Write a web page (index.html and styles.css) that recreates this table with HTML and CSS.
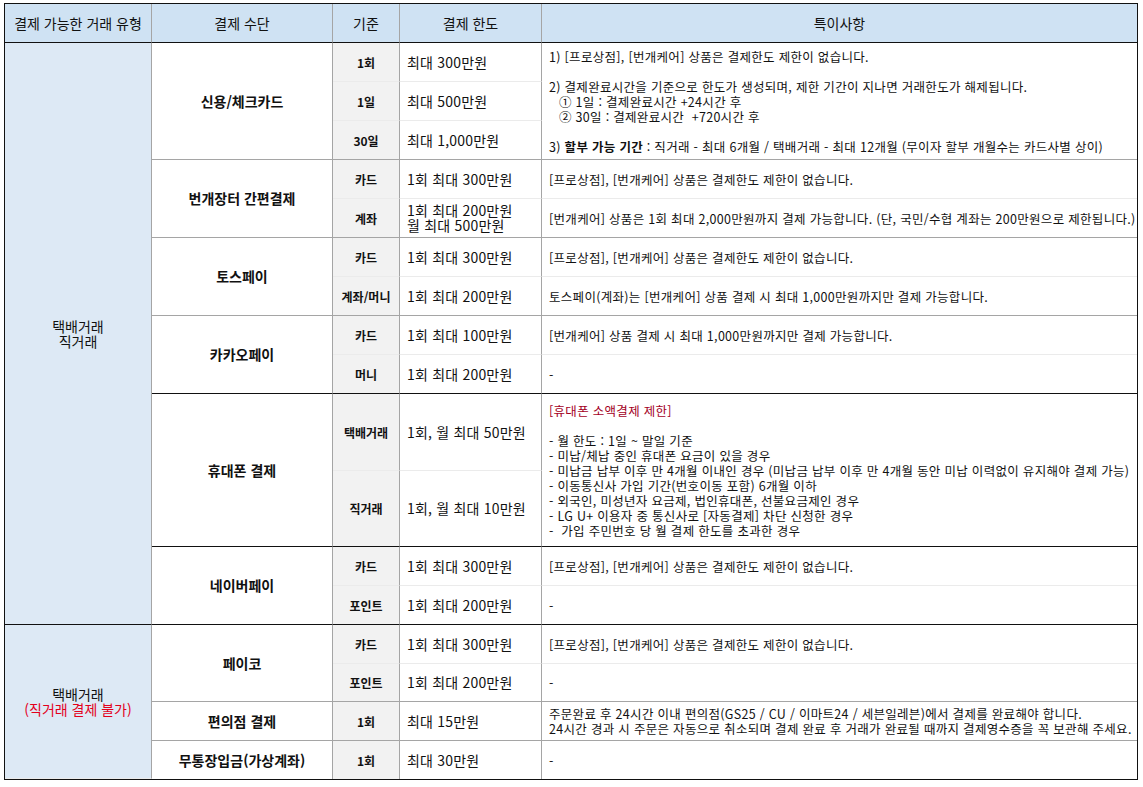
FILE: index.html
```html
<!DOCTYPE html>
<html lang="ko">
<head>
<meta charset="utf-8">
<title>결제 한도 안내</title>
<link rel="stylesheet" href="styles.css">
</head>
<body>
<table class="pay">
  <colgroup>
    <col class="c-type">
    <col class="c-method">
    <col class="c-basis">
    <col class="c-limit">
    <col class="c-note">
  </colgroup>
  <thead>
    <tr class="head">
      <th>결제 가능한 거래 유형</th>
      <th>결제 수단</th>
      <th>기준</th>
      <th>결제 한도</th>
      <th class="last">특이사항</th>
    </tr>
  </thead>
  <tbody>
    <!-- 신용/체크카드 -->
    <tr class="r">
      <td class="type dark" rowspan="13">택배거래<br>직거래</td>
      <td class="method gray" rowspan="3">신용/체크카드</td>
      <td class="basis">1회</td>
      <td class="limit">최대 300만원</td>
      <td class="note gray" rowspan="3">1) [프로상점], [번개케어] 상품은 결제한도 제한이 없습니다.<br><br>2) 결제완료시간을 기준으로 한도가 생성되며, 제한 기간이 지나면 거래한도가 해제됩니다.<br><span class="ind">① 1일 : 결제완료시간 +24시간 후</span><br><span class="ind">② 30일 : 결제완료시간&nbsp; +720시간 후</span><br><br>3) <b>할부 가능 기간</b> : 직거래 - 최대 6개월 / 택배거래 - 최대 12개월 (무이자 할부 개월수는 카드사별 상이)</td>
    </tr>
    <tr class="r">
      <td class="basis">1일</td>
      <td class="limit">최대 500만원</td>
    </tr>
    <tr class="r">
      <td class="basis gray">30일</td>
      <td class="limit gray">최대 1,000만원</td>
    </tr>
    <!-- 번개장터 간편결제 -->
    <tr class="r">
      <td class="method gray" rowspan="2">번개장터 간편결제</td>
      <td class="basis">카드</td>
      <td class="limit">1회 최대 300만원</td>
      <td class="note">[프로상점], [번개케어] 상품은 결제한도 제한이 없습니다.</td>
    </tr>
    <tr class="r">
      <td class="basis gray">계좌</td>
      <td class="limit gray two">1회 최대 200만원<br>월 최대 500만원</td>
      <td class="note gray">[번개케어] 상품은 1회 최대 2,000만원까지 결제 가능합니다. (단, 국민/수협 계좌는 200만원으로 제한됩니다.)</td>
    </tr>
    <!-- 토스페이 -->
    <tr class="r">
      <td class="method gray" rowspan="2">토스페이</td>
      <td class="basis">카드</td>
      <td class="limit">1회 최대 300만원</td>
      <td class="note">[프로상점], [번개케어] 상품은 결제한도 제한이 없습니다.</td>
    </tr>
    <tr class="r">
      <td class="basis gray">계좌/머니</td>
      <td class="limit gray">1회 최대 200만원</td>
      <td class="note gray">토스페이(계좌)는 [번개케어] 상품 결제 시 최대 1,000만원까지만 결제 가능합니다.</td>
    </tr>
    <!-- 카카오페이 -->
    <tr class="r">
      <td class="method dark" rowspan="2">카카오페이</td>
      <td class="basis">카드</td>
      <td class="limit">1회 최대 100만원</td>
      <td class="note">[번개케어] 상품 결제 시 최대 1,000만원까지만 결제 가능합니다.</td>
    </tr>
    <tr class="r">
      <td class="basis dark">머니</td>
      <td class="limit dark">1회 최대 200만원</td>
      <td class="note dark">-</td>
    </tr>
    <!-- 휴대폰 결제 -->
    <tr class="r-phone1">
      <td class="method dark" rowspan="2">휴대폰 결제</td>
      <td class="basis">택배거래</td>
      <td class="limit">1회, 월 최대 50만원</td>
      <td class="note dark" rowspan="2"><span class="warn">[휴대폰 소액결제 제한]</span><br><br>- 월 한도 : 1일 ~ 말일 기준<br>- 미납/체납 중인 휴대폰 요금이 있을 경우<br>- 미납금 납부 이후 만 4개월 이내인 경우 (미납금 납부 이후 만 4개월 동안 미납 이력없이 유지해야 결제 가능)<br>- 이동통신사 가입 기간(번호이동 포함) 6개월 이하<br>- 외국인, 미성년자 요금제, 법인휴대폰, 선불요금제인 경우<br>- LG U+ 이용자 중 통신사로 [자동결제] 차단 신청한 경우<br>-&nbsp; 가입 주민번호 당 월 결제 한도를 초과한 경우</td>
    </tr>
    <tr class="r-phone2">
      <td class="basis dark">직거래</td>
      <td class="limit dark">1회, 월 최대 10만원</td>
    </tr>
    <!-- 네이버페이 -->
    <tr class="r">
      <td class="method dark" rowspan="2">네이버페이</td>
      <td class="basis">카드</td>
      <td class="limit">1회 최대 300만원</td>
      <td class="note">[프로상점], [번개케어] 상품은 결제한도 제한이 없습니다.</td>
    </tr>
    <tr class="r">
      <td class="basis dark">포인트</td>
      <td class="limit dark">1회 최대 200만원</td>
      <td class="note dark">-</td>
    </tr>
    <!-- 페이코 -->
    <tr class="r">
      <td class="type" rowspan="4">택배거래<br><span class="no">(직거래 결제 불가)</span></td>
      <td class="method gray" rowspan="2">페이코</td>
      <td class="basis">카드</td>
      <td class="limit">1회 최대 300만원</td>
      <td class="note">[프로상점], [번개케어] 상품은 결제한도 제한이 없습니다.</td>
    </tr>
    <tr class="r-short">
      <td class="basis gray">포인트</td>
      <td class="limit gray">1회 최대 200만원</td>
      <td class="note gray">-</td>
    </tr>
    <!-- 편의점 결제 -->
    <tr class="r">
      <td class="method gray">편의점 결제</td>
      <td class="basis gray">1회</td>
      <td class="limit gray">최대 15만원</td>
      <td class="note gray">주문완료 후 24시간 이내 편의점(GS25 / CU / 이마트24 / 세븐일레븐)에서 결제를 완료해야 합니다.<br>24시간 경과 시 주문은 자동으로 취소되며 결제 완료 후 거래가 완료될 때까지 결제영수증을 꼭 보관해 주세요.</td>
    </tr>
    <!-- 무통장입금 -->
    <tr class="r-short">
      <td class="method none">무통장입금(가상계좌)</td>
      <td class="basis none">1회</td>
      <td class="limit none">최대 30만원</td>
      <td class="note none">-</td>
    </tr>
  </tbody>
</table>
</body>
</html>
```

FILE: styles.css
```css
html, body {
  margin: 0;
  padding: 0;
  background: #ffffff;
}

body {
  font-family: "Noto Sans CJK KR", "Noto Sans", "Liberation Sans", sans-serif;
  color: #111111;
}

.pay {
  margin: 3px 0 0 4px;
  width: 1134px;
  table-layout: fixed;
  border-collapse: separate;
  border-spacing: 0;
  border: 1px solid #111111;
}

.c-type { width: 147px; }
.c-method { width: 181px; }
.c-basis { width: 67px; }
.c-limit { width: 142px; }
.c-note { width: 595px; }

.pay th,
.pay td {
  box-sizing: border-box;
  padding: 0 7px;
  vertical-align: middle;
  border-right: 1px solid #a5a5a5;
  border-bottom: 1px solid #ebebeb;
  line-height: 15px;
}

.pay .last,
.pay .note {
  border-right: none;
}

.head {
  height: 39px;
}

.head th {
  background: #cfe2f3;
  font-weight: normal;
  font-size: 14px;
  text-align: center;
  border-bottom: 1px solid #111111;
  padding: 0 2px;
  white-space: nowrap;
}

.r { height: 39px; }
.r-short { height: 38px; }
.r-phone1 { height: 77px; }
.r-phone2 { height: 76px; }

.type {
  background: #dde9f5;
  text-align: center;
  font-size: 14px;
  line-height: 16px;
}

.no {
  color: #e3001b;
}

.method {
  text-align: center;
  font-weight: bold;
  font-size: 14px;
  white-space: nowrap;
}

.basis {
  background: #f2f2f2;
  text-align: center;
  font-weight: bold;
  font-size: 12px;
  padding: 0 2px;
}

.limit {
  font-size: 14px;
  line-height: 16px;
  letter-spacing: 0.2px;
  padding-left: 8px;
  white-space: nowrap;
}

.note {
  font-size: 12.5px;
  letter-spacing: 0.3px;
  white-space: nowrap;
  overflow: hidden;
  padding-left: 7px;
  padding-right: 0;
}

.note b {
  font-weight: bold;
}

.ind {
  padding-left: 10px;
}

.warn {
  color: #a3001e;
}

.pay .gray {
  border-bottom: 1px solid #a5a5a5;
}

.pay .dark {
  border-bottom: 1px solid #111111;
}

.pay .none {
  border-bottom: none;
}
```
